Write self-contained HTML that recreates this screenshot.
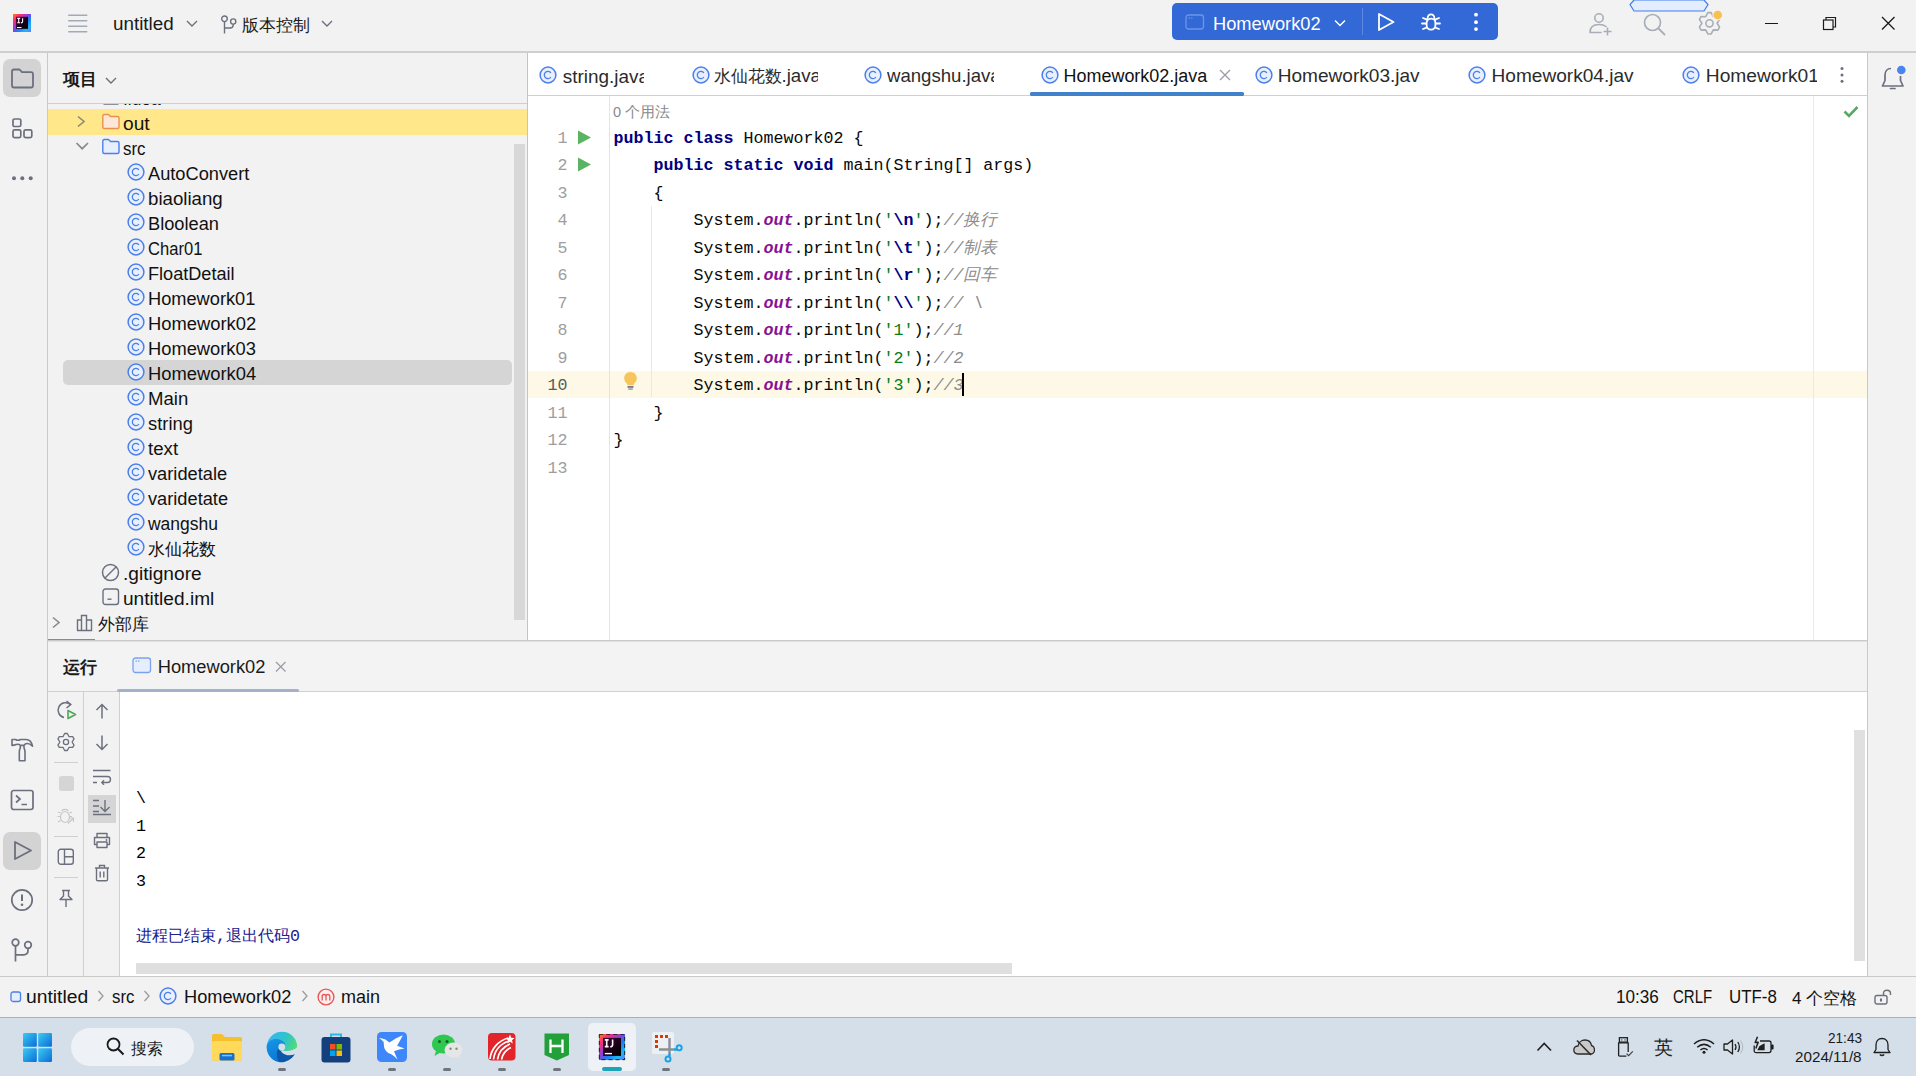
<!DOCTYPE html>
<html><head><meta charset="utf-8"><title>IntelliJ</title>
<style>
html,body{margin:0;padding:0;width:1916px;height:1076px;overflow:hidden;background:#F2F2F2}
body{position:relative;font-family:"Liberation Sans",sans-serif}
div{position:absolute;box-sizing:border-box}
</style></head><body>
<div style="left:0px;top:0px;width:1916px;height:1076px;background:#F2F2F2;"></div>
<div style="left:0px;top:51px;width:1916px;height:2px;background:#CFCFCF;"></div>
<div style="left:47px;top:53px;width:1px;height:923px;background:#C9C9C9;"></div>
<div style="left:1867px;top:53px;width:1px;height:923px;background:#C9C9C9;"></div>
<div style="left:48px;top:53px;width:479px;height:587px;background:#F2F2F2;"></div>
<div style="left:48px;top:103px;width:479px;height:1px;background:#CFCFCF;"></div>
<div style="left:527px;top:53px;width:1px;height:587px;background:#C4C4C4;"></div>
<div style="left:528px;top:53px;width:1339px;height:587px;background:#FFFFFF;"></div>
<div style="left:528px;top:95px;width:1339px;height:1px;background:#D0D0D0;"></div>
<div style="left:609px;top:96px;width:1px;height:544px;background:#E4E4E4;"></div>
<div style="left:1813px;top:96px;width:1px;height:544px;background:#E9E9E9;"></div>
<div style="left:48px;top:640px;width:1819px;height:1px;background:#C9C9C9;"></div>
<div style="left:48px;top:641px;width:1819px;height:1px;background:#E2E2E2;"></div>
<div style="left:48px;top:642px;width:1819px;height:49px;background:#F3F3F3;"></div>
<div style="left:48px;top:691px;width:1819px;height:1px;background:#D0D0D0;"></div>
<div style="left:48px;top:692px;width:35px;height:284px;background:#F2F2F2;"></div>
<div style="left:83px;top:692px;width:1px;height:284px;background:#CFCFCF;"></div>
<div style="left:84px;top:692px;width:35px;height:284px;background:#F2F2F2;"></div>
<div style="left:119px;top:692px;width:1px;height:284px;background:#CFCFCF;"></div>
<div style="left:120px;top:692px;width:1747px;height:284px;background:#FFFFFF;"></div>
<div style="left:0px;top:976px;width:1916px;height:1px;background:#C9C9C9;"></div>
<div style="left:0px;top:977px;width:1916px;height:40px;background:#F2F2F2;"></div>
<div style="left:0px;top:1017px;width:1916px;height:59px;background:#D4DFE9;"></div>
<div style="left:0px;top:1017px;width:1916px;height:1px;background:#A9B0B6;"></div>
<svg style="position:absolute;left:13px;top:14px;" width="18" height="18" viewBox="0 0 18 18"><defs><linearGradient id="ijg" x1="0" y1="0" x2="1" y2="1"><stop offset="0" stop-color="#FF8A00"/><stop offset="0.2" stop-color="#FF2D78"/><stop offset="0.45" stop-color="#8A3FD8"/><stop offset="0.6" stop-color="#1A7CF5"/><stop offset="0.8" stop-color="#20B6F5"/><stop offset="1" stop-color="#6A7BFF"/></linearGradient><linearGradient id="iji" x1="0" y1="0" x2="1" y2="1"><stop offset="0" stop-color="#3D0032"/><stop offset="1" stop-color="#000"/></linearGradient></defs><rect x="0" y="0" width="18" height="18" fill="url(#ijg)"/><rect x="3.1" y="2.8" width="11.9" height="12" fill="url(#iji)"/><path d="M4.2 4.4 H7.2 M5.7 4.4 V8.8 M4.2 8.8 H7.2 M9.6 4.2 V7.6 Q9.6 8.9 8 8.9" fill="none" stroke="#fff" stroke-width="1.1"/><rect x="4" y="13" width="4.5" height="1" fill="#fff"/></svg>
<svg style="position:absolute;left:67px;top:14px;" width="21" height="19" viewBox="0 0 21 19"><rect x="1" y="0.4" width="19.5" height="1.6" rx="0.8" fill="#A4A9B8"/><rect x="1" y="6.0" width="19.5" height="1.6" rx="0.8" fill="#A4A9B8"/><rect x="1" y="11.4" width="19.5" height="1.6" rx="0.8" fill="#A4A9B8"/><rect x="1" y="17.0" width="19.5" height="1.6" rx="0.8" fill="#A4A9B8"/></svg>
<div style="left:113.40px;top:14.14px;font:normal normal 18.300px/20.441px 'Liberation Sans', sans-serif;color:#1A1A1A;white-space:pre;transform:scaleX(1.0303);transform-origin:0 0;">untitled</div>
<svg style="position:absolute;left:186px;top:20px;" width="12" height="7" viewBox="0 0 12 7"><path d="M1 1 L6 6 L11 1" fill="none" stroke="#6C707E" stroke-width="1.4"/></svg>
<svg style="position:absolute;left:219.5px;top:15px;" width="17" height="19" viewBox="0 0 17 19"><circle cx="4.5" cy="3.8" r="2.8" fill="none" stroke="#6C707E" stroke-width="1.4"/><circle cx="13.2" cy="6.5" r="2.6" fill="none" stroke="#6C707E" stroke-width="1.4"/><path d="M4.5 6.6 V18.5 M4.5 13 H10 Q13.2 13 13.2 10 V9.1" fill="none" stroke="#6C707E" stroke-width="1.4"/></svg>
<div style="left:241.50px;top:15.92px;font:normal normal 17.000px/18.989px 'Liberation Sans', sans-serif;color:#1A1A1A;white-space:pre;">版本控制</div>
<svg style="position:absolute;left:321px;top:20px;" width="12" height="7" viewBox="0 0 12 7"><path d="M1 1 L6 6 L11 1" fill="none" stroke="#6C707E" stroke-width="1.4"/></svg>
<div style="left:1172px;top:3px;width:326px;height:37px;background:#3369D6;border-radius:5px"></div>
<svg style="position:absolute;left:1185px;top:14px;" width="20" height="16" viewBox="0 0 20 16"><rect x="1" y="1" width="17.5" height="14" rx="2.5" fill="none" stroke="#6D95E6" stroke-width="1.3"/><rect x="3.5" y="3.5" width="1.5" height="1.2" fill="#6D95E6"/><rect x="6" y="3.5" width="1.5" height="1.2" fill="#6D95E6"/></svg>
<div style="left:1213.00px;top:14.45px;font:normal normal 18.282px/20.421px 'Liberation Sans', sans-serif;color:#FFFFFF;white-space:pre;">Homework02</div>
<svg style="position:absolute;left:1334px;top:19px;" width="12" height="8" viewBox="0 0 12 8"><path d="M1 1.5 L6 6.5 L11 1.5" fill="none" stroke="#fff" stroke-width="1.5"/></svg>
<div style="left:1362px;top:8px;width:1px;height:27px;background:#5F88E0;"></div>
<svg style="position:absolute;left:1377px;top:12px;" width="19" height="20" viewBox="0 0 19 20"><path d="M2 2 L16.5 10 L2 18 Z" fill="none" stroke="#fff" stroke-width="1.8" stroke-linejoin="round"/></svg>
<svg style="position:absolute;left:1419px;top:12px;" width="24" height="20" viewBox="0 0 24 20"><rect x="7.6" y="6.6" width="8.8" height="11" rx="4.3" fill="none" stroke="#fff" stroke-width="1.8"/><path d="M8.6 6.6 C8.4 1 15.6 1 15.4 6.6 M4 6 L7.8 7.6 M3 11.5 H7 M4 17 L7.6 15.6 M20 6 L16.2 7.6 M21 11.5 H17 M20 17 L16.4 15.6" fill="none" stroke="#fff" stroke-width="1.8" stroke-linecap="round"/></svg>
<svg style="position:absolute;left:1472px;top:12px;" width="8" height="20" viewBox="0 0 8 20"><circle cx="4" cy="2.7" r="1.9" fill="#fff"/><circle cx="4" cy="10.2" r="1.9" fill="#fff"/><circle cx="4" cy="17.1" r="1.9" fill="#fff"/></svg>
<svg style="position:absolute;left:1628px;top:-1px;" width="82" height="14" viewBox="0 0 82 14"><path d="M6 1 H76 L80 5.5 L76 12 H6 L2 5.5 Z" fill="#E3EDFD" stroke="#3D7FF0" stroke-width="1.2"/></svg>
<svg style="position:absolute;left:1589px;top:12px;" width="24" height="25" viewBox="0 0 24 25"><circle cx="10" cy="6" r="4.2" fill="none" stroke="#A9ADB8" stroke-width="1.6"/><path d="M1 20.5 C1 14 6 12.5 10 12.5 C13 12.5 15.5 13.3 17 14.5 M1 20.5 H12" fill="none" stroke="#A9ADB8" stroke-width="1.6" stroke-linecap="round"/><path d="M18.5 15.5 V23.5 M14.5 19.5 H22.5" stroke="#A9ADB8" stroke-width="1.6"/></svg>
<svg style="position:absolute;left:1643px;top:13px;" width="24" height="23" viewBox="0 0 24 23"><circle cx="9.5" cy="9.5" r="8" fill="none" stroke="#A9ADB8" stroke-width="1.7"/><path d="M15.5 15.5 L22 22" stroke="#A9ADB8" stroke-width="1.8"/></svg>
<svg style="position:absolute;left:1696px;top:9px;" width="28" height="28" viewBox="0 0 28 28"><path d="M15.19 3.63 L11.81 3.63 L9.70 7.72 L5.11 7.50 L3.42 10.43 L5.90 14.30 L3.42 18.17 L5.11 21.10 L9.70 20.88 L11.81 24.97 L15.19 24.97 L17.30 20.88 L21.89 21.10 L23.58 18.17 L21.10 14.30 L23.58 10.43 L21.89 7.50 L17.30 7.72 Z" fill="none" stroke="#A9ADB8" stroke-width="1.6" stroke-linejoin="round"/><circle cx="13.5" cy="14.3" r="3.6" fill="none" stroke="#A9ADB8" stroke-width="1.6"/><circle cx="21.7" cy="6" r="5.4" fill="#F2F2F2"/><circle cx="21.7" cy="6" r="4.3" fill="#F7C04F"/></svg>
<div style="left:1765px;top:23px;width:12.5px;height:1.3px;background:#1A1A1A;"></div>
<svg style="position:absolute;left:1822px;top:16px;" width="16" height="15" viewBox="0 0 16 15"><rect x="1.5" y="4" width="9.5" height="9.5" fill="none" stroke="#1A1A1A" stroke-width="1.2"/><path d="M4 4 V1.5 H13.5 V11 H11" fill="none" stroke="#1A1A1A" stroke-width="1.2"/></svg>
<svg style="position:absolute;left:1881px;top:16px;" width="15" height="15" viewBox="0 0 15 15"><path d="M1 1 L13.5 13.5 M13.5 1 L1 13.5" stroke="#1A1A1A" stroke-width="1.3"/></svg>
<div style="left:3px;top:59px;width:38px;height:38px;background:#D3D3D3;border-radius:7px"></div>
<svg style="position:absolute;left:10px;top:68px;" width="25" height="21" viewBox="0 0 25 21"><path d="M2 3.5 Q2 1.5 4 1.5 H9.5 L12 4.2 H21 Q23 4.2 23 6.2 V17.5 Q23 19.5 21 19.5 H4 Q2 19.5 2 17.5 Z" fill="none" stroke="#6C707E" stroke-width="1.8" stroke-linejoin="round"/></svg>
<svg style="position:absolute;left:12px;top:118px;" width="22" height="21" viewBox="0 0 22 21"><rect x="1" y="1" width="7.8" height="7.5" rx="1.6" fill="none" stroke="#6C707E" stroke-width="1.7"/><rect x="1" y="11.8" width="7.8" height="7.8" rx="1.6" fill="none" stroke="#6C707E" stroke-width="1.7"/><rect x="12" y="11.8" width="7.8" height="7.8" rx="1.6" fill="none" stroke="#6C707E" stroke-width="1.7"/></svg>
<svg style="position:absolute;left:10px;top:174px;" width="26" height="9" viewBox="0 0 26 9"><circle cx="4" cy="4.3" r="2" fill="#6C707E"/><circle cx="12.3" cy="4.3" r="2" fill="#6C707E"/><circle cx="20.7" cy="4.3" r="2" fill="#6C707E"/></svg>
<svg style="position:absolute;left:10px;top:737px;" width="25" height="26" viewBox="0 0 25 26"><path d="M2 2.5 H5.5 Q7.8 4 10.5 2.5 H16 Q21.2 2.5 22.5 9.2 Q19.5 6.2 16.8 6.5 Q14.8 6.8 14 8.4 H10.3 Q8.8 6.6 6.2 7.6 Q4.2 8.4 2 8.4 Z M10.3 8.4 V10.8 Q9.3 13 9.3 15 V23.8 H15 V15 Q15 13 14 10.8 V8.4" fill="none" stroke="#6C707E" stroke-width="1.6" stroke-linejoin="round"/></svg>
<svg style="position:absolute;left:10px;top:789px;" width="25" height="22" viewBox="0 0 25 22"><rect x="1.5" y="1.5" width="21.5" height="19" rx="2.2" fill="none" stroke="#6C707E" stroke-width="1.7"/><path d="M6 6.5 L10 10 L6 13.5 M11.5 15.5 H17" fill="none" stroke="#6C707E" stroke-width="1.7"/></svg>
<div style="left:3px;top:832px;width:38px;height:38px;background:#D3D3D3;border-radius:7px"></div>
<svg style="position:absolute;left:13px;top:840px;" width="20" height="21" viewBox="0 0 20 21"><path d="M2 2 L18 10.5 L2 19 Z" fill="none" stroke="#6C707E" stroke-width="1.8" stroke-linejoin="round"/></svg>
<svg style="position:absolute;left:10px;top:888px;" width="25" height="24" viewBox="0 0 25 24"><circle cx="12" cy="12" r="10.2" fill="none" stroke="#6C707E" stroke-width="1.7"/><path d="M12 6.5 V13" stroke="#6C707E" stroke-width="2"/><circle cx="12" cy="16.8" r="1.3" fill="#6C707E"/></svg>
<svg style="position:absolute;left:11px;top:938px;" width="24" height="25" viewBox="0 0 24 25"><circle cx="4.5" cy="4.5" r="3.3" fill="none" stroke="#6C707E" stroke-width="1.7"/><circle cx="17" cy="7" r="3.3" fill="none" stroke="#6C707E" stroke-width="1.7"/><path d="M4.5 7.8 V23.5 M4.5 16.8 H12.5 Q17 16.8 17 12.5 V10.3" fill="none" stroke="#6C707E" stroke-width="1.7"/></svg>
<div style="left:63.20px;top:71.10px;font:normal bold 16.800px/18.766px 'Liberation Sans', sans-serif;color:#1A1A1A;white-space:pre;">项目</div>
<svg style="position:absolute;left:105px;top:77px;" width="12" height="7" viewBox="0 0 12 7"><path d="M1 1 L6 6 L11 1" fill="none" stroke="#6C707E" stroke-width="1.4"/></svg>
<div style="left:48px;top:104px;width:479px;height:536px;overflow:hidden">
<svg style="position:absolute;left:54px;top:-6px;" width="18" height="10" viewBox="0 0 18 10"><rect x="1" y="0" width="16" height="6" rx="1.5" fill="#E8E8E8" stroke="#6C707E" stroke-width="1.3"/></svg>
<div style="left:75.30px;top:-15.16px;font:normal normal 18.300px/20.441px 'Liberation Sans', sans-serif;color:#111;white-space:pre;transform:scaleX(0.9500);transform-origin:0 0;">.idea</div>
<div style="left:0px;top:5px;width:479px;height:25.5px;background:#FFE78A;"></div>
<svg style="position:absolute;left:28px;top:11px;" width="10" height="13" viewBox="0 0 10 13"><path d="M2 1.5 L8 6.5 L2 11.5" fill="none" stroke="#8E8A6A" stroke-width="1.6"/></svg>
<svg style="position:absolute;left:53px;top:9px;" width="20" height="17" viewBox="0 0 20 17"><path d="M1.8 3 Q1.8 1.5 3.3 1.5 H7.5 L9.5 3.5 H16.5 Q18 3.5 18 5 V14 Q18 15.5 16.5 15.5 H3.3 Q1.8 15.5 1.8 14 Z" fill="#FDE8D8" stroke="#E8914E" stroke-width="1.4" stroke-linejoin="round"/></svg>
<div style="left:75.30px;top:9.84px;font:normal normal 18.300px/20.441px 'Liberation Sans', sans-serif;color:#111;white-space:pre;transform:scaleX(1.0456);transform-origin:0 0;">out</div>
<svg style="position:absolute;left:27px;top:37px;" width="15" height="10" viewBox="0 0 15 10"><path d="M1.5 2 L7.2 7.7 L13 2" fill="none" stroke="#8A8A8A" stroke-width="1.7"/></svg>
<svg style="position:absolute;left:53px;top:34px;" width="20" height="17" viewBox="0 0 20 17"><path d="M1.8 3 Q1.8 1.5 3.3 1.5 H7.5 L9.5 3.5 H16.5 Q18 3.5 18 5 V14 Q18 15.5 16.5 15.5 H3.3 Q1.8 15.5 1.8 14 Z" fill="#E7EEFD" stroke="#4A80EE" stroke-width="1.4" stroke-linejoin="round"/></svg>
<div style="left:75.30px;top:34.94px;font:normal normal 18.300px/20.441px 'Liberation Sans', sans-serif;color:#111;white-space:pre;transform:scaleX(0.9224);transform-origin:0 0;">src</div>
<div style="left:15px;top:256px;width:449px;height:24.5px;background:#D5D5D5;border-radius:5px"></div>
<svg style="position:absolute;left:79px;top:59.30000000000001px" width="18" height="18" viewBox="0 0 18 18"><circle cx="9" cy="9" r="7.9" fill="#E8EFFD" stroke="#4B7FEA" stroke-width="1.5"/><path d="M11.9 7.0 A3.6 3.6 0 1 0 11.9 11.0" fill="none" stroke="#4B7FEA" stroke-width="1.3"/></svg>
<div style="left:100.40px;top:60.44px;font:normal normal 18.300px/20.441px 'Liberation Sans', sans-serif;color:#111;white-space:pre;transform:scaleX(0.9968);transform-origin:0 0;">AutoConvert</div>
<svg style="position:absolute;left:79px;top:84.30000000000001px" width="18" height="18" viewBox="0 0 18 18"><circle cx="9" cy="9" r="7.9" fill="#E8EFFD" stroke="#4B7FEA" stroke-width="1.5"/><path d="M11.9 7.0 A3.6 3.6 0 1 0 11.9 11.0" fill="none" stroke="#4B7FEA" stroke-width="1.3"/></svg>
<div style="left:100.40px;top:85.44px;font:normal normal 18.300px/20.441px 'Liberation Sans', sans-serif;color:#111;white-space:pre;transform:scaleX(1.0210);transform-origin:0 0;">biaoliang</div>
<svg style="position:absolute;left:79px;top:109.30000000000001px" width="18" height="18" viewBox="0 0 18 18"><circle cx="9" cy="9" r="7.9" fill="#E8EFFD" stroke="#4B7FEA" stroke-width="1.5"/><path d="M11.9 7.0 A3.6 3.6 0 1 0 11.9 11.0" fill="none" stroke="#4B7FEA" stroke-width="1.3"/></svg>
<div style="left:100.40px;top:110.44px;font:normal normal 18.300px/20.441px 'Liberation Sans', sans-serif;color:#111;white-space:pre;transform:scaleX(0.9968);transform-origin:0 0;">Bloolean</div>
<svg style="position:absolute;left:79px;top:134.3px" width="18" height="18" viewBox="0 0 18 18"><circle cx="9" cy="9" r="7.9" fill="#E8EFFD" stroke="#4B7FEA" stroke-width="1.5"/><path d="M11.9 7.0 A3.6 3.6 0 1 0 11.9 11.0" fill="none" stroke="#4B7FEA" stroke-width="1.3"/></svg>
<div style="left:100.40px;top:135.44px;font:normal normal 18.300px/20.441px 'Liberation Sans', sans-serif;color:#111;white-space:pre;transform:scaleX(0.9064);transform-origin:0 0;">Char01</div>
<svg style="position:absolute;left:79px;top:159.3px" width="18" height="18" viewBox="0 0 18 18"><circle cx="9" cy="9" r="7.9" fill="#E8EFFD" stroke="#4B7FEA" stroke-width="1.5"/><path d="M11.9 7.0 A3.6 3.6 0 1 0 11.9 11.0" fill="none" stroke="#4B7FEA" stroke-width="1.3"/></svg>
<div style="left:100.40px;top:160.44px;font:normal normal 18.300px/20.441px 'Liberation Sans', sans-serif;color:#111;white-space:pre;transform:scaleX(0.9912);transform-origin:0 0;">FloatDetail</div>
<svg style="position:absolute;left:79px;top:184.3px" width="18" height="18" viewBox="0 0 18 18"><circle cx="9" cy="9" r="7.9" fill="#E8EFFD" stroke="#4B7FEA" stroke-width="1.5"/><path d="M11.9 7.0 A3.6 3.6 0 1 0 11.9 11.0" fill="none" stroke="#4B7FEA" stroke-width="1.3"/></svg>
<div style="left:100.40px;top:185.44px;font:normal normal 18.300px/20.441px 'Liberation Sans', sans-serif;color:#111;white-space:pre;transform:scaleX(0.9971);transform-origin:0 0;">Homework01</div>
<svg style="position:absolute;left:79px;top:209.3px" width="18" height="18" viewBox="0 0 18 18"><circle cx="9" cy="9" r="7.9" fill="#E8EFFD" stroke="#4B7FEA" stroke-width="1.5"/><path d="M11.9 7.0 A3.6 3.6 0 1 0 11.9 11.0" fill="none" stroke="#4B7FEA" stroke-width="1.3"/></svg>
<div style="left:100.40px;top:210.44px;font:normal normal 18.300px/20.441px 'Liberation Sans', sans-serif;color:#111;white-space:pre;transform:scaleX(1.0046);transform-origin:0 0;">Homework02</div>
<svg style="position:absolute;left:79px;top:234.3px" width="18" height="18" viewBox="0 0 18 18"><circle cx="9" cy="9" r="7.9" fill="#E8EFFD" stroke="#4B7FEA" stroke-width="1.5"/><path d="M11.9 7.0 A3.6 3.6 0 1 0 11.9 11.0" fill="none" stroke="#4B7FEA" stroke-width="1.3"/></svg>
<div style="left:100.40px;top:235.44px;font:normal normal 18.300px/20.441px 'Liberation Sans', sans-serif;color:#111;white-space:pre;transform:scaleX(1.0018);transform-origin:0 0;">Homework03</div>
<svg style="position:absolute;left:79px;top:259.3px" width="18" height="18" viewBox="0 0 18 18"><circle cx="9" cy="9" r="7.9" fill="#E8EFFD" stroke="#4B7FEA" stroke-width="1.5"/><path d="M11.9 7.0 A3.6 3.6 0 1 0 11.9 11.0" fill="none" stroke="#4B7FEA" stroke-width="1.3"/></svg>
<div style="left:100.40px;top:260.44px;font:normal normal 18.300px/20.441px 'Liberation Sans', sans-serif;color:#111;white-space:pre;transform:scaleX(1.0046);transform-origin:0 0;">Homework04</div>
<svg style="position:absolute;left:79px;top:284.3px" width="18" height="18" viewBox="0 0 18 18"><circle cx="9" cy="9" r="7.9" fill="#E8EFFD" stroke="#4B7FEA" stroke-width="1.5"/><path d="M11.9 7.0 A3.6 3.6 0 1 0 11.9 11.0" fill="none" stroke="#4B7FEA" stroke-width="1.3"/></svg>
<div style="left:100.40px;top:285.44px;font:normal normal 18.300px/20.441px 'Liberation Sans', sans-serif;color:#111;white-space:pre;transform:scaleX(1.0160);transform-origin:0 0;">Main</div>
<svg style="position:absolute;left:79px;top:309.3px" width="18" height="18" viewBox="0 0 18 18"><circle cx="9" cy="9" r="7.9" fill="#E8EFFD" stroke="#4B7FEA" stroke-width="1.5"/><path d="M11.9 7.0 A3.6 3.6 0 1 0 11.9 11.0" fill="none" stroke="#4B7FEA" stroke-width="1.3"/></svg>
<div style="left:100.40px;top:310.44px;font:normal normal 18.300px/20.441px 'Liberation Sans', sans-serif;color:#111;white-space:pre;transform:scaleX(1.0034);transform-origin:0 0;">string</div>
<svg style="position:absolute;left:79px;top:334.3px" width="18" height="18" viewBox="0 0 18 18"><circle cx="9" cy="9" r="7.9" fill="#E8EFFD" stroke="#4B7FEA" stroke-width="1.5"/><path d="M11.9 7.0 A3.6 3.6 0 1 0 11.9 11.0" fill="none" stroke="#4B7FEA" stroke-width="1.3"/></svg>
<div style="left:100.40px;top:335.44px;font:normal normal 18.300px/20.441px 'Liberation Sans', sans-serif;color:#111;white-space:pre;transform:scaleX(1.0205);transform-origin:0 0;">text</div>
<svg style="position:absolute;left:79px;top:359.3px" width="18" height="18" viewBox="0 0 18 18"><circle cx="9" cy="9" r="7.9" fill="#E8EFFD" stroke="#4B7FEA" stroke-width="1.5"/><path d="M11.9 7.0 A3.6 3.6 0 1 0 11.9 11.0" fill="none" stroke="#4B7FEA" stroke-width="1.3"/></svg>
<div style="left:100.40px;top:360.44px;font:normal normal 18.300px/20.441px 'Liberation Sans', sans-serif;color:#111;white-space:pre;transform:scaleX(0.9981);transform-origin:0 0;">varidetale</div>
<svg style="position:absolute;left:79px;top:384.3px" width="18" height="18" viewBox="0 0 18 18"><circle cx="9" cy="9" r="7.9" fill="#E8EFFD" stroke="#4B7FEA" stroke-width="1.5"/><path d="M11.9 7.0 A3.6 3.6 0 1 0 11.9 11.0" fill="none" stroke="#4B7FEA" stroke-width="1.3"/></svg>
<div style="left:100.40px;top:385.44px;font:normal normal 18.300px/20.441px 'Liberation Sans', sans-serif;color:#111;white-space:pre;transform:scaleX(0.9967);transform-origin:0 0;">varidetate</div>
<svg style="position:absolute;left:79px;top:409.29999999999995px" width="18" height="18" viewBox="0 0 18 18"><circle cx="9" cy="9" r="7.9" fill="#E8EFFD" stroke="#4B7FEA" stroke-width="1.5"/><path d="M11.9 7.0 A3.6 3.6 0 1 0 11.9 11.0" fill="none" stroke="#4B7FEA" stroke-width="1.3"/></svg>
<div style="left:100.40px;top:410.44px;font:normal normal 18.300px/20.441px 'Liberation Sans', sans-serif;color:#111;white-space:pre;transform:scaleX(0.9556);transform-origin:0 0;">wangshu</div>
<svg style="position:absolute;left:79px;top:434.29999999999995px" width="18" height="18" viewBox="0 0 18 18"><circle cx="9" cy="9" r="7.9" fill="#E8EFFD" stroke="#4B7FEA" stroke-width="1.5"/><path d="M11.9 7.0 A3.6 3.6 0 1 0 11.9 11.0" fill="none" stroke="#4B7FEA" stroke-width="1.3"/></svg>
<div style="left:100.40px;top:435.62px;font:normal normal 17.000px/18.989px 'Liberation Sans', sans-serif;color:#111;white-space:pre;">水仙花数</div>
<svg style="position:absolute;left:53px;top:459px;" width="20" height="20" viewBox="0 0 20 20"><circle cx="9.5" cy="9.5" r="8" fill="none" stroke="#6C707E" stroke-width="1.5"/><path d="M4 15 L15 4" stroke="#6C707E" stroke-width="1.5"/></svg>
<div style="left:75.30px;top:460.44px;font:normal normal 18.300px/20.441px 'Liberation Sans', sans-serif;color:#111;white-space:pre;transform:scaleX(1.0454);transform-origin:0 0;">.gitignore</div>
<svg style="position:absolute;left:54px;top:484px;" width="18" height="18" viewBox="0 0 18 18"><rect x="1" y="1" width="15.5" height="15.5" rx="2.5" fill="none" stroke="#6C707E" stroke-width="1.4"/><rect x="5.5" y="10.5" width="4" height="1.4" fill="#6C707E"/></svg>
<div style="left:75.30px;top:485.44px;font:normal normal 18.300px/20.441px 'Liberation Sans', sans-serif;color:#111;white-space:pre;transform:scaleX(1.0449);transform-origin:0 0;">untitled.iml</div>
<svg style="position:absolute;left:3px;top:512px;" width="10" height="13" viewBox="0 0 10 13"><path d="M2 1.5 L8 6.5 L2 11.5" fill="none" stroke="#8A8A8A" stroke-width="1.6"/></svg>
<svg style="position:absolute;left:28px;top:510px;" width="19" height="18" viewBox="0 0 19 18"><path d="M1.5 16.5 V6 H5.5 V16.5 M5.5 16.5 V1.5 H10.5 V16.5 M10.5 16.5 V6 H15.5 V16.5 H1 " fill="none" stroke="#6C707E" stroke-width="1.4"/></svg>
<div style="left:49.50px;top:510.62px;font:normal normal 17.000px/18.989px 'Liberation Sans', sans-serif;color:#111;white-space:pre;">外部库</div>
<div style="left:466px;top:40px;width:11px;height:476px;background:#D8D8D8;"></div>
<div style="left:0px;top:535px;width:47px;height:1px;background:#5A8DEE;"></div>
</div>
<svg style="position:absolute;left:539px;top:66px" width="18" height="18" viewBox="0 0 18 18"><circle cx="9" cy="9" r="7.9" fill="#E8EFFD" stroke="#4B7FEA" stroke-width="1.5"/><path d="M11.9 7.0 A3.6 3.6 0 1 0 11.9 11.0" fill="none" stroke="#4B7FEA" stroke-width="1.3"/></svg>
<div style="left:562.8px;top:60px;width:81.5px;height:30px;overflow:hidden">
<div style="left:0.00px;top:5.57px;font:normal normal 18.930px/21.145px 'Liberation Sans', sans-serif;color:#2B2B2B;white-space:pre;">string.java</div>
</div>
<svg style="position:absolute;left:691.5px;top:66px" width="18" height="18" viewBox="0 0 18 18"><circle cx="9" cy="9" r="7.9" fill="#E8EFFD" stroke="#4B7FEA" stroke-width="1.5"/><path d="M11.9 7.0 A3.6 3.6 0 1 0 11.9 11.0" fill="none" stroke="#4B7FEA" stroke-width="1.3"/></svg>
<div style="left:713.5px;top:60px;width:104.5px;height:30px;overflow:hidden">
<div style="left:0px;top:5.78px;font:normal normal 18.7px/20.89px 'Liberation Sans', sans-serif;color:#2B2B2B;white-space:pre"><span style="font-size:17.2px">水仙花数</span>.java</div>
</div>
<svg style="position:absolute;left:864px;top:66px" width="18" height="18" viewBox="0 0 18 18"><circle cx="9" cy="9" r="7.9" fill="#E8EFFD" stroke="#4B7FEA" stroke-width="1.5"/><path d="M11.9 7.0 A3.6 3.6 0 1 0 11.9 11.0" fill="none" stroke="#4B7FEA" stroke-width="1.3"/></svg>
<div style="left:887px;top:60px;width:106.8px;height:30px;overflow:hidden">
<div style="left:0.00px;top:5.87px;font:normal normal 18.600px/20.776px 'Liberation Sans', sans-serif;color:#2B2B2B;white-space:pre;">wangshu.java</div>
</div>
<svg style="position:absolute;left:1041px;top:66px" width="18" height="18" viewBox="0 0 18 18"><circle cx="9" cy="9" r="7.9" fill="#E8EFFD" stroke="#4B7FEA" stroke-width="1.5"/><path d="M11.9 7.0 A3.6 3.6 0 1 0 11.9 11.0" fill="none" stroke="#4B7FEA" stroke-width="1.3"/></svg>
<div style="left:1063.60px;top:66.46px;font:normal normal 17.942px/20.042px 'Liberation Sans', sans-serif;color:#111;white-space:pre;">Homework02.java</div>
<svg style="position:absolute;left:1219px;top:69px;" width="12" height="12" viewBox="0 0 12 12"><path d="M1 1 L11 11 M11 1 L1 11" stroke="#9A9DA5" stroke-width="1.3"/></svg>
<div style="left:1030px;top:92px;width:214px;height:3.5px;background:#4181C9;border-radius:1.5px"></div>
<svg style="position:absolute;left:1254.6px;top:66px" width="18" height="18" viewBox="0 0 18 18"><circle cx="9" cy="9" r="7.9" fill="#E8EFFD" stroke="#4B7FEA" stroke-width="1.5"/><path d="M11.9 7.0 A3.6 3.6 0 1 0 11.9 11.0" fill="none" stroke="#4B7FEA" stroke-width="1.3"/></svg>
<div style="left:1277.7px;top:60px;width:142.8px;height:30px;overflow:hidden">
<div style="left:0.00px;top:5.44px;font:normal normal 19.070px/21.301px 'Liberation Sans', sans-serif;color:#2B2B2B;white-space:pre;">Homework03.java</div>
</div>
<svg style="position:absolute;left:1468px;top:66px" width="18" height="18" viewBox="0 0 18 18"><circle cx="9" cy="9" r="7.9" fill="#E8EFFD" stroke="#4B7FEA" stroke-width="1.5"/><path d="M11.9 7.0 A3.6 3.6 0 1 0 11.9 11.0" fill="none" stroke="#4B7FEA" stroke-width="1.3"/></svg>
<div style="left:1491.6px;top:60px;width:142.8px;height:30px;overflow:hidden">
<div style="left:0.00px;top:5.44px;font:normal normal 19.070px/21.301px 'Liberation Sans', sans-serif;color:#2B2B2B;white-space:pre;">Homework04.java</div>
</div>
<svg style="position:absolute;left:1682px;top:66px" width="18" height="18" viewBox="0 0 18 18"><circle cx="9" cy="9" r="7.9" fill="#E8EFFD" stroke="#4B7FEA" stroke-width="1.5"/><path d="M11.9 7.0 A3.6 3.6 0 1 0 11.9 11.0" fill="none" stroke="#4B7FEA" stroke-width="1.3"/></svg>
<div style="left:1705.8px;top:60px;width:110.8px;height:30px;overflow:hidden">
<div style="left:0.00px;top:5.32px;font:normal normal 19.200px/21.446px 'Liberation Sans', sans-serif;color:#2B2B2B;white-space:pre;">Homework01.java</div>
</div>
<svg style="position:absolute;left:1838px;top:66px;" width="8" height="18" viewBox="0 0 8 18"><circle cx="4" cy="2.6" r="1.5" fill="#6C707E"/><circle cx="4" cy="9" r="1.5" fill="#6C707E"/><circle cx="4" cy="15.2" r="1.5" fill="#6C707E"/></svg>
<svg style="position:absolute;left:1881px;top:65px;" width="26" height="27" viewBox="0 0 26 27"><path d="M10 3.5 C6 3.5 4 6.5 4 10 V15.5 L1.5 21 H22 L19.5 15.5 V11" fill="none" stroke="#6C707E" stroke-width="1.7" stroke-linejoin="round"/><path d="M9.5 23.5 H14" stroke="#6C707E" stroke-width="1.7" stroke-linecap="round"/><circle cx="20.3" cy="5" r="4.3" fill="#4A84F0"/></svg>
<div style="left:528px;top:371px;width:1339px;height:27px;background:#FDF9E6;"></div>
<div style="left:609px;top:96px;width:1px;height:544px;background:#E4E4E4;"></div>
<div style="left:1813px;top:96px;width:1px;height:544px;background:#E9E9E9;"></div>
<div style="left:651px;top:206px;width:1px;height:191px;background:#E8E8E8;"></div>
<div style="left:613.10px;top:103.59px;font:normal normal 14.600px/16.308px 'Liberation Sans', sans-serif;color:#8A8A8A;white-space:pre;">0 个用法</div>
<div style="left:613.5px;top:129.72px;font:16.667px/18.880px 'Liberation Mono', monospace;color:#080808;white-space:pre"><span style="color:#000080;font-weight:bold">public</span><span style=""> </span><span style="color:#000080;font-weight:bold">class</span><span style=""> Homework02 {</span></div>
<div style="left:613.5px;top:157.22px;font:16.667px/18.880px 'Liberation Mono', monospace;color:#080808;white-space:pre"><span style="">    </span><span style="color:#000080;font-weight:bold">public</span><span style=""> </span><span style="color:#000080;font-weight:bold">static</span><span style=""> </span><span style="color:#000080;font-weight:bold">void</span><span style=""> main(String[] args)</span></div>
<div style="left:613.5px;top:184.72px;font:16.667px/18.880px 'Liberation Mono', monospace;color:#080808;white-space:pre"><span style="">    {</span></div>
<div style="left:613.5px;top:212.22px;font:16.667px/18.880px 'Liberation Mono', monospace;color:#080808;white-space:pre"><span style="">        System.</span><span style="color:#871094;font-style:italic;font-weight:bold">out</span><span style="">.println(</span><span style="color:#067D17">&#x27;</span><span style="color:#000080;font-weight:bold">\n</span><span style="color:#067D17">&#x27;</span><span style="">);</span><span style="color:#8C8C8C;font-style:italic">//换行</span></div>
<div style="left:613.5px;top:239.72px;font:16.667px/18.880px 'Liberation Mono', monospace;color:#080808;white-space:pre"><span style="">        System.</span><span style="color:#871094;font-style:italic;font-weight:bold">out</span><span style="">.println(</span><span style="color:#067D17">&#x27;</span><span style="color:#000080;font-weight:bold">\t</span><span style="color:#067D17">&#x27;</span><span style="">);</span><span style="color:#8C8C8C;font-style:italic">//制表</span></div>
<div style="left:613.5px;top:267.22px;font:16.667px/18.880px 'Liberation Mono', monospace;color:#080808;white-space:pre"><span style="">        System.</span><span style="color:#871094;font-style:italic;font-weight:bold">out</span><span style="">.println(</span><span style="color:#067D17">&#x27;</span><span style="color:#000080;font-weight:bold">\r</span><span style="color:#067D17">&#x27;</span><span style="">);</span><span style="color:#8C8C8C;font-style:italic">//回车</span></div>
<div style="left:613.5px;top:294.72px;font:16.667px/18.880px 'Liberation Mono', monospace;color:#080808;white-space:pre"><span style="">        System.</span><span style="color:#871094;font-style:italic;font-weight:bold">out</span><span style="">.println(</span><span style="color:#067D17">&#x27;</span><span style="color:#000080;font-weight:bold">\\</span><span style="color:#067D17">&#x27;</span><span style="">);</span><span style="color:#8C8C8C;font-style:italic">// \</span></div>
<div style="left:613.5px;top:322.22px;font:16.667px/18.880px 'Liberation Mono', monospace;color:#080808;white-space:pre"><span style="">        System.</span><span style="color:#871094;font-style:italic;font-weight:bold">out</span><span style="">.println(</span><span style="color:#067D17">&#x27;1&#x27;</span><span style="">);</span><span style="color:#8C8C8C;font-style:italic">//1</span></div>
<div style="left:613.5px;top:349.72px;font:16.667px/18.880px 'Liberation Mono', monospace;color:#080808;white-space:pre"><span style="">        System.</span><span style="color:#871094;font-style:italic;font-weight:bold">out</span><span style="">.println(</span><span style="color:#067D17">&#x27;2&#x27;</span><span style="">);</span><span style="color:#8C8C8C;font-style:italic">//2</span></div>
<div style="left:613.5px;top:377.22px;font:16.667px/18.880px 'Liberation Mono', monospace;color:#080808;white-space:pre"><span style="">        System.</span><span style="color:#871094;font-style:italic;font-weight:bold">out</span><span style="">.println(</span><span style="color:#067D17">&#x27;3&#x27;</span><span style="">);</span><span style="color:#8C8C8C;font-style:italic">//3</span></div>
<div style="left:613.5px;top:404.72px;font:16.667px/18.880px 'Liberation Mono', monospace;color:#080808;white-space:pre"><span style="">    }</span></div>
<div style="left:613.5px;top:432.22px;font:16.667px/18.880px 'Liberation Mono', monospace;color:#080808;white-space:pre"><span style="">}</span></div>
<div style="left:557.50px;top:129.72px;font:normal normal 16.667px/18.880px 'Liberation Mono', monospace;color:#9E9E9E;white-space:pre;">1</div>
<div style="left:557.50px;top:157.22px;font:normal normal 16.667px/18.880px 'Liberation Mono', monospace;color:#9E9E9E;white-space:pre;">2</div>
<div style="left:557.50px;top:184.72px;font:normal normal 16.667px/18.880px 'Liberation Mono', monospace;color:#9E9E9E;white-space:pre;">3</div>
<div style="left:557.50px;top:212.22px;font:normal normal 16.667px/18.880px 'Liberation Mono', monospace;color:#9E9E9E;white-space:pre;">4</div>
<div style="left:557.50px;top:239.72px;font:normal normal 16.667px/18.880px 'Liberation Mono', monospace;color:#9E9E9E;white-space:pre;">5</div>
<div style="left:557.50px;top:267.22px;font:normal normal 16.667px/18.880px 'Liberation Mono', monospace;color:#9E9E9E;white-space:pre;">6</div>
<div style="left:557.50px;top:294.72px;font:normal normal 16.667px/18.880px 'Liberation Mono', monospace;color:#9E9E9E;white-space:pre;">7</div>
<div style="left:557.50px;top:322.22px;font:normal normal 16.667px/18.880px 'Liberation Mono', monospace;color:#9E9E9E;white-space:pre;">8</div>
<div style="left:557.50px;top:349.72px;font:normal normal 16.667px/18.880px 'Liberation Mono', monospace;color:#9E9E9E;white-space:pre;">9</div>
<div style="left:547.50px;top:377.22px;font:normal normal 16.667px/18.880px 'Liberation Mono', monospace;color:#5A5A5A;white-space:pre;">10</div>
<div style="left:547.50px;top:404.72px;font:normal normal 16.667px/18.880px 'Liberation Mono', monospace;color:#9E9E9E;white-space:pre;">11</div>
<div style="left:547.50px;top:432.22px;font:normal normal 16.667px/18.880px 'Liberation Mono', monospace;color:#9E9E9E;white-space:pre;">12</div>
<div style="left:547.50px;top:459.72px;font:normal normal 16.667px/18.880px 'Liberation Mono', monospace;color:#9E9E9E;white-space:pre;">13</div>
<div style="left:962px;top:373px;width:2px;height:23px;background:#000;"></div>
<svg style="position:absolute;left:577px;top:129.5px;" width="15" height="15" viewBox="0 0 15 15"><path d="M1 0.5 L14 7.5 L1 14.5 Z" fill="#5BB461"/></svg>
<svg style="position:absolute;left:577px;top:157px;" width="15" height="15" viewBox="0 0 15 15"><path d="M1 0.5 L14 7.5 L1 14.5 Z" fill="#5BB461"/></svg>
<svg style="position:absolute;left:623px;top:371px;" width="16" height="21" viewBox="0 0 16 21"><path d="M7.5 1 C3.5 1 1.2 4 1.2 7.2 C1.2 10 3 11.5 4.2 13 V14.2 H10.8 V13 C12 11.5 13.8 10 13.8 7.2 C13.8 4 11.5 1 7.5 1 Z" fill="#F8C55C"/><rect x="4.5" y="15.2" width="6" height="1.5" fill="#5E6270"/><rect x="5.2" y="17.3" width="4.6" height="1.6" fill="#A0A3AA"/></svg>
<svg style="position:absolute;left:1843px;top:105px;" width="16" height="13" viewBox="0 0 16 13"><path d="M1.5 6.5 L6 11 L14.5 2" fill="none" stroke="#59A869" stroke-width="2.6"/></svg>
<div style="left:63.20px;top:657.93px;font:normal bold 17.200px/19.212px 'Liberation Sans', sans-serif;color:#1A1A1A;white-space:pre;">运行</div>
<svg style="position:absolute;left:132px;top:657px;" width="20" height="17" viewBox="0 0 20 17"><rect x="1" y="1" width="17.5" height="14.5" rx="2.5" fill="#E6EEFD" stroke="#7BA2EE" stroke-width="1.3"/><rect x="3.5" y="3.5" width="1.5" height="1.2" fill="#7BA2EE"/><rect x="6" y="3.5" width="1.5" height="1.2" fill="#7BA2EE"/></svg>
<div style="left:157.70px;top:657.44px;font:normal normal 18.299px/20.440px 'Liberation Sans', sans-serif;color:#1A1A1A;white-space:pre;">Homework02</div>
<svg style="position:absolute;left:275px;top:661px;" width="12" height="12" viewBox="0 0 12 12"><path d="M1 1 L10.5 10.5 M10.5 1 L1 10.5" stroke="#9A9DA5" stroke-width="1.3"/></svg>
<div style="left:117px;top:688.5px;width:182px;height:3px;background:#A3B1CB;border-radius:1.5px"></div>
<svg style="position:absolute;left:55px;top:700px;" width="22" height="21" viewBox="0 0 22 21"><path d="M15.5 4.5 A7.5 7.5 0 1 0 9 17.5" fill="none" stroke="#6C707E" stroke-width="1.5"/><path d="M11.5 1 L15.8 4.5 L11.5 8" fill="none" stroke="#6C707E" stroke-width="1.5"/><path d="M13 10.5 L20.5 14.5 L13 18.5 Z" fill="none" stroke="#4DA659" stroke-width="1.6" stroke-linejoin="round"/></svg>
<svg style="position:absolute;left:55px;top:731px;" width="22" height="22" viewBox="0 0 22 22"><path d="M12.35 2.51 L9.65 2.51 L7.95 5.72 L4.32 5.59 L2.97 7.92 L4.90 11.00 L2.97 14.08 L4.32 16.41 L7.95 16.28 L9.65 19.49 L12.35 19.49 L14.05 16.28 L17.68 16.41 L19.03 14.08 L17.10 11.00 L19.03 7.92 L17.68 5.59 L14.05 5.72 Z" fill="none" stroke="#6C707E" stroke-width="1.3" stroke-linejoin="round"/><circle cx="11" cy="11" r="2.6" fill="none" stroke="#6C707E" stroke-width="1.3"/></svg>
<div style="left:54px;top:762px;width:24px;height:1px;background:#D0D0D0;"></div>
<div style="left:58.5px;top:775.5px;width:15px;height:15px;background:#D5D5D5;border-radius:2.5px"></div>
<svg style="position:absolute;left:57px;top:807px;" width="18" height="17" viewBox="0 0 18 17"><ellipse cx="8" cy="10" rx="4.5" ry="5.5" fill="none" stroke="#C8C8C8" stroke-width="1.2"/><path d="M5 4 C5 1.8 11 1.8 11 4 M3.5 9.5 H0.5 M3.5 6 L1 5 M3.5 13.5 L1 15 M12.5 9.5 H15 M12.5 6 L15 5 M11 16.5 L16.5 11 M12.5 11 H16.5 V15" fill="none" stroke="#C8C8C8" stroke-width="1.2"/></svg>
<div style="left:54px;top:836px;width:24px;height:1px;background:#D0D0D0;"></div>
<svg style="position:absolute;left:57px;top:848px;" width="18" height="18" viewBox="0 0 18 18"><rect x="1.3" y="1.3" width="15" height="15" rx="2.5" fill="none" stroke="#6C707E" stroke-width="1.4"/><path d="M7.5 1.3 V16.3 M7.5 8.8 H16.3" stroke="#6C707E" stroke-width="1.4"/></svg>
<div style="left:54px;top:877px;width:24px;height:1px;background:#D0D0D0;"></div>
<svg style="position:absolute;left:58px;top:889px;" width="16" height="19" viewBox="0 0 16 19"><path d="M4 1.5 H12 M5.5 1.5 V7 L2 10.5 H14 L10.5 7 V1.5 M8 10.5 V18" fill="none" stroke="#6C707E" stroke-width="1.4" stroke-linejoin="round"/></svg>
<svg style="position:absolute;left:95px;top:703px;" width="14" height="16" viewBox="0 0 14 16"><path d="M7 1.5 V15.5 M1.5 7 L7 1.5 L12.5 7" fill="none" stroke="#6C707E" stroke-width="1.5"/></svg>
<svg style="position:absolute;left:95px;top:735px;" width="14" height="16" viewBox="0 0 14 16"><path d="M7 0.5 V14.5 M1.5 9 L7 14.5 L12.5 9" fill="none" stroke="#6C707E" stroke-width="1.5"/></svg>
<svg style="position:absolute;left:92px;top:769px;" width="20" height="16" viewBox="0 0 20 16"><path d="M1 1.5 H18.5 M1 7.5 H15.5 Q18.5 7.5 18.5 10.5 Q18.5 13.5 15.5 13.5 H10 M1 13.5 H5" fill="none" stroke="#6C707E" stroke-width="1.4"/><path d="M12 11.2 L9.8 13.5 L12 15.8" fill="none" stroke="#6C707E" stroke-width="1.4"/></svg>
<div style="left:88px;top:794.5px;width:28px;height:28px;background:#D5D5D5;"></div>
<svg style="position:absolute;left:92px;top:799px;" width="20" height="17" viewBox="0 0 20 17"><path d="M1 1.5 H7 M1 7 H7 M1 12.5 H7 M1 15.5 H19 M13 1 V12 M8.5 8 L13 12.5 L17.5 8" fill="none" stroke="#6C707E" stroke-width="1.4"/></svg>
<svg style="position:absolute;left:93px;top:832px;" width="18" height="17" viewBox="0 0 18 17"><path d="M4 5.5 V1.5 H14 V5.5 M4 12.5 H1.5 V5.5 H16.5 V12.5 H14 M4 10 H14 V15.5 H4 Z" fill="none" stroke="#6C707E" stroke-width="1.4" stroke-linejoin="round"/><circle cx="13.5" cy="8" r="0.9" fill="#6C707E"/></svg>
<svg style="position:absolute;left:94px;top:864px;" width="16" height="18" viewBox="0 0 16 18"><path d="M1 4 H15 M5.5 4 V1.5 H10.5 V4 M2.5 4 V15.5 Q2.5 16.8 3.8 16.8 H12.2 Q13.5 16.8 13.5 15.5 V4 M6.2 7.5 V13.5 M9.8 7.5 V13.5" fill="none" stroke="#6C707E" stroke-width="1.4"/></svg>
<div style="left:136px;top:790.12px;font:16.667px/18.880px 'Liberation Mono', monospace;color:#000;white-space:pre">\</div>
<div style="left:136px;top:817.62px;font:16.667px/18.880px 'Liberation Mono', monospace;color:#000;white-space:pre">1</div>
<div style="left:136px;top:845.12px;font:16.667px/18.880px 'Liberation Mono', monospace;color:#000;white-space:pre">2</div>
<div style="left:136px;top:872.62px;font:16.667px/18.880px 'Liberation Mono', monospace;color:#000;white-space:pre">3</div>
<div style="left:136px;top:928px;font:15.5px/18px 'Liberation Mono', monospace;color:#20208F;white-space:pre">进程已结束<span style="font-size:16.667px">,</span>退出代码<span style="font-size:16.667px">0</span></div>
<div style="left:136px;top:963px;width:876px;height:11px;background:#DFDFDF;"></div>
<div style="left:1854px;top:730px;width:11px;height:231px;background:#E0E0E0;"></div>
<svg style="position:absolute;left:10px;top:991px;" width="12" height="12" viewBox="0 0 12 12"><rect x="1" y="1" width="9.5" height="9.5" rx="2" fill="#E6EEFD" stroke="#4B7FEA" stroke-width="1.3"/></svg>
<div style="left:26.00px;top:987.24px;font:normal normal 18.300px/20.441px 'Liberation Sans', sans-serif;color:#111;white-space:pre;transform:scaleX(1.0557);transform-origin:0 0;">untitled</div>
<svg style="position:absolute;left:97px;top:990px;" width="8" height="12" viewBox="0 0 8 12"><path d="M1.5 1 L6 6 L1.5 11" fill="none" stroke="#9A9A9A" stroke-width="1.3"/></svg>
<div style="left:112.30px;top:987.24px;font:normal normal 18.300px/20.441px 'Liberation Sans', sans-serif;color:#111;white-space:pre;transform:scaleX(0.9183);transform-origin:0 0;">src</div>
<svg style="position:absolute;left:143px;top:990px;" width="8" height="12" viewBox="0 0 8 12"><path d="M1.5 1 L6 6 L1.5 11" fill="none" stroke="#9A9A9A" stroke-width="1.3"/></svg>
<svg style="position:absolute;left:159px;top:986.5px" width="18" height="18" viewBox="0 0 18 18"><circle cx="9" cy="9" r="7.9" fill="#E8EFFD" stroke="#4B7FEA" stroke-width="1.5"/><path d="M11.9 7.0 A3.6 3.6 0 1 0 11.9 11.0" fill="none" stroke="#4B7FEA" stroke-width="1.3"/></svg>
<div style="left:183.70px;top:987.24px;font:normal normal 18.300px/20.441px 'Liberation Sans', sans-serif;color:#111;white-space:pre;transform:scaleX(0.9971);transform-origin:0 0;">Homework02</div>
<svg style="position:absolute;left:301px;top:990px;" width="8" height="12" viewBox="0 0 8 12"><path d="M1.5 1 L6 6 L1.5 11" fill="none" stroke="#9A9A9A" stroke-width="1.3"/></svg>
<svg style="position:absolute;left:317px;top:987.5px;" width="18" height="18" viewBox="0 0 18 18"><circle cx="9" cy="9" r="7.9" fill="#FDEDED" stroke="#E55757" stroke-width="1.4"/><path d="M5.2 12.5 V7 M5.2 8.5 Q5.2 6.5 7 6.5 Q9 6.5 9 8.5 V12.5 M9 8.5 Q9 6.5 10.8 6.5 Q12.8 6.5 12.8 8.5 V12.5" fill="none" stroke="#E55757" stroke-width="1.3"/></svg>
<div style="left:341.30px;top:987.24px;font:normal normal 18.300px/20.441px 'Liberation Sans', sans-serif;color:#111;white-space:pre;transform:scaleX(0.9858);transform-origin:0 0;">main</div>
<div style="left:1615.70px;top:987.14px;font:normal normal 18.300px/20.441px 'Liberation Sans', sans-serif;color:#111;white-space:pre;transform:scaleX(0.9368);transform-origin:0 0;">10:36</div>
<div style="left:1673.40px;top:987.14px;font:normal normal 18.300px/20.441px 'Liberation Sans', sans-serif;color:#111;white-space:pre;transform:scaleX(0.8203);transform-origin:0 0;">CRLF</div>
<div style="left:1728.60px;top:987.14px;font:normal normal 18.300px/20.441px 'Liberation Sans', sans-serif;color:#111;white-space:pre;transform:scaleX(0.9239);transform-origin:0 0;">UTF-8</div>
<div style="left:1792.00px;top:989.12px;font:normal normal 17.000px/18.989px 'Liberation Sans', sans-serif;color:#111;white-space:pre;">4 个空格</div>
<svg style="position:absolute;left:1874px;top:989px;" width="18" height="16" viewBox="0 0 18 16"><rect x="1" y="6.5" width="12" height="8.5" rx="2" fill="none" stroke="#6C707E" stroke-width="1.4"/><path d="M9.5 6.5 V4.5 Q9.5 1.2 13 1.2 Q16.5 1.2 16.5 4.5 V6" fill="none" stroke="#6C707E" stroke-width="1.4"/><rect x="6" y="9.5" width="2" height="3" fill="#6C707E"/></svg>
<svg style="position:absolute;left:23px;top:1033px;" width="30" height="30" viewBox="0 0 30 30"><defs><linearGradient id="wg" x1="0" y1="0" x2="1" y2="1"><stop offset="0" stop-color="#3CCBF4"/><stop offset="1" stop-color="#0A6CD6"/></linearGradient></defs><rect x="0" y="0" width="13.8" height="13.8" rx="1.2" fill="url(#wg)"/><rect x="15.2" y="0" width="13.8" height="13.8" rx="1.2" fill="url(#wg)"/><rect x="0" y="15.2" width="13.8" height="13.8" rx="1.2" fill="url(#wg)"/><rect x="15.2" y="15.2" width="13.8" height="13.8" rx="1.2" fill="url(#wg)"/></svg>
<div style="left:71px;top:1028px;width:123px;height:38px;background:#EEF2F6;border-radius:19px"></div>
<svg style="position:absolute;left:106px;top:1037px;" width="19" height="19" viewBox="0 0 19 19"><circle cx="7.5" cy="7.5" r="6" fill="none" stroke="#1A1A1A" stroke-width="1.8"/><path d="M11.8 11.8 L17.5 17.5" stroke="#1A1A1A" stroke-width="2"/></svg>
<div style="left:131.00px;top:1039.97px;font:normal normal 15.500px/17.314px 'Liberation Sans', sans-serif;color:#1A1A1A;white-space:pre;">搜索</div>
<svg style="position:absolute;left:211px;top:1033px;" width="32" height="28" viewBox="0 0 32 28"><path d="M1 2.5 Q1 1 2.5 1 H11 L14 4 H29.5 Q31 4 31 5.5 V26 Q31 27.5 29.5 27.5 H2.5 Q1 27.5 1 26 Z" fill="#F4C02E"/><rect x="1" y="8" width="30" height="19.5" rx="1.5" fill="#FFD95A"/><rect x="8.5" y="20" width="15" height="7.5" rx="1.5" fill="#1570D4"/><rect x="11" y="21.8" width="10" height="1.5" fill="#7FC4FF"/></svg>
<svg style="position:absolute;left:266px;top:1031px;" width="32" height="32" viewBox="0 0 32 32"><defs><linearGradient id="eg1" x1="0" y1="0.2" x2="1" y2="0.7"><stop offset="0" stop-color="#38B6F4"/><stop offset="0.5" stop-color="#2FC3C9"/><stop offset="1" stop-color="#5CE35E"/></linearGradient><linearGradient id="eg2" x1="0" y1="0" x2="0.3" y2="1"><stop offset="0" stop-color="#1896E6"/><stop offset="1" stop-color="#0A78D6"/></linearGradient></defs><circle cx="16" cy="16" r="15.2" fill="url(#eg1)"/><path d="M16 19 C19 20.8 27 20.8 31.8 15.5 L32 32 L10 32 Z" fill="#D4DFE9"/><path d="M0.9 13.8 C3 9.5 6.5 8 10 8 C14.5 8 18.5 10.5 19.4 13.5 L12.4 17.8 C11.2 21 11.2 27 14.2 31.3 A15.2 15.2 0 0 1 0.9 13.8 Z" fill="url(#eg2)"/><path d="M12.4 17.6 C10 21 10.3 26.5 13.2 31.1 C18.5 32.2 25 29 28.9 23.2 C24 25.2 19 24.5 16 21.5 C14.5 20 13.4 19 12.4 17.6 Z" fill="#0D57A8"/><circle cx="15.8" cy="16" r="3.4" fill="#D4DFE9"/></svg>
<svg style="position:absolute;left:321px;top:1033px;" width="30" height="30" viewBox="0 0 30 30"><path d="M10 4 V1.5 H20 V4" fill="none" stroke="#35B4E8" stroke-width="2"/><rect x="0.5" y="4" width="29" height="25.5" rx="3" fill="#13407D"/><rect x="9" y="11" width="5.5" height="5.5" fill="#F25022"/><rect x="15.5" y="11" width="5.5" height="5.5" fill="#7FBA00"/><rect x="9" y="17.5" width="5.5" height="5.5" fill="#00A4EF"/><rect x="15.5" y="17.5" width="5.5" height="5.5" fill="#FFB900"/></svg>
<svg style="position:absolute;left:377px;top:1032px;" width="30" height="30" viewBox="0 0 30 30"><rect x="0" y="0" width="30" height="30" rx="4.5" fill="#3D87FB"/><path d="M1.9 6.1 Q5 6.3 8.4 7.6 L12.4 10.5 Q18 6 25.8 3.2 Q23 9 20.1 13.7 L27.4 16.6 Q22 17.2 17 19.3 L20.5 27.5 Q17 23.5 13.8 22 Q8 20 7.1 14.9 Q6.6 11 6.7 9.9 Q4.5 7.5 1.9 6.1 Z" fill="#fff"/></svg>
<svg style="position:absolute;left:431px;top:1034px;" width="33" height="25" viewBox="0 0 33 25"><ellipse cx="12.5" cy="10" rx="11.5" ry="9.5" fill="#2DC84D"/><path d="M5 17 L3.5 22 L9.5 18.5 Z" fill="#2DC84D"/><circle cx="8.5" cy="7.5" r="1.5" fill="#1B5E2A"/><circle cx="16" cy="7.5" r="1.5" fill="#1B5E2A"/><ellipse cx="22.5" cy="16" rx="9" ry="7.5" fill="#E6E6E6"/><path d="M27 21 L29 24.5 L24 22.5 Z" fill="#E6E6E6"/><circle cx="19.5" cy="14.8" r="1.2" fill="#888"/><circle cx="25.5" cy="14.8" r="1.2" fill="#888"/></svg>
<svg style="position:absolute;left:488px;top:1033px;" width="28" height="28" viewBox="0 0 28 28"><rect x="0" y="0" width="27.5" height="27.5" rx="4" fill="#E2242B"/><path d="M2 26 C3 16 10 8 20 5 M5.5 26.5 C6.5 18 12 11 21 8 M9.5 26.5 C10.5 20 14.5 14 22 11 M13.5 26.5 C14.5 21 17.5 17 23 14.5" fill="none" stroke="#fff" stroke-width="1.7"/><path d="M22 1.5 L23.3 4.7 L26.5 5 L24 7.2 L24.8 10.5 L22 8.8 L19.2 10.5 L20 7.2 L17.5 5 L20.7 4.7 Z" fill="#fff"/></svg>
<svg style="position:absolute;left:544px;top:1033px;" width="26" height="28" viewBox="0 0 26 28"><path d="M0.5 0.5 H25 V22 L12.8 27.5 L0.5 22 Z" fill="#22A03A"/><path d="M6.5 6.5 V20 M18.5 6.5 V20 M6.5 13 H18.5" stroke="#fff" stroke-width="2.3"/></svg>
<div style="left:588px;top:1023px;width:48px;height:48px;background:#EEF2F7;border-radius:5px"></div>
<svg style="position:absolute;left:598px;top:1034px;" width="28" height="27" viewBox="0 0 28 27"><defs><linearGradient id="ijg2" x1="0" y1="0" x2="1" y2="1"><stop offset="0" stop-color="#FF8A00"/><stop offset="0.2" stop-color="#FF2D78"/><stop offset="0.45" stop-color="#8A3FD8"/><stop offset="0.6" stop-color="#1A7CF5"/><stop offset="0.8" stop-color="#20B6F5"/><stop offset="1" stop-color="#6A7BFF"/></linearGradient><linearGradient id="iji2" x1="0" y1="0" x2="1" y2="1"><stop offset="0" stop-color="#3D0032"/><stop offset="1" stop-color="#000"/></linearGradient></defs><rect x="1" y="0" width="26" height="26" fill="url(#ijg2)"/><rect x="1.3" y="0.3" width="25.4" height="25.4" fill="none" stroke="#111" stroke-width="0.9" stroke-dasharray="4 3"/><rect x="5" y="3.9" width="18" height="18" fill="url(#iji2)"/><path d="M6.8 5.9 H10.6 M8.7 5.9 V12.6 M6.8 12.6 H10.6 M14.6 5.6 V10.8 Q14.6 12.8 12.2 12.8" fill="none" stroke="#fff" stroke-width="1.6"/><rect x="6.8" y="18.9" width="7.2" height="1.4" fill="#fff"/></svg>
<div style="left:602px;top:1067px;width:20px;height:4px;background:#1BA3B8;border-radius:2px"></div>
<svg style="position:absolute;left:652px;top:1031px;" width="32" height="32" viewBox="0 0 32 32"><rect x="0" y="1" width="22" height="22" rx="2" fill="#EDF0F3"/><g fill="#D83B01"><rect x="3" y="4" width="3" height="3"/><rect x="8" y="4" width="3" height="3"/><rect x="13" y="4" width="3" height="3"/><rect x="3" y="9" width="3" height="3"/><rect x="3" y="14" width="3" height="3"/></g><path d="M17.5 7 V22 M7 18.5 H22" stroke="#8A9097" stroke-width="2.4"/><path d="M22 18.5 H25 M17.5 22 V25.5" stroke="#1BA1E2" stroke-width="2.4"/><circle cx="27.2" cy="16.8" r="2.5" fill="none" stroke="#1BA1E2" stroke-width="2"/><circle cx="16" cy="28" r="2.5" fill="none" stroke="#1BA1E2" stroke-width="2"/></svg>
<div style="left:278px;top:1067.5px;width:8px;height:3.5px;background:#70757D;border-radius:2px"></div>
<div style="left:387.8px;top:1067.5px;width:8px;height:3.5px;background:#70757D;border-radius:2px"></div>
<div style="left:442.9px;top:1067.5px;width:8px;height:3.5px;background:#70757D;border-radius:2px"></div>
<div style="left:498px;top:1067.5px;width:8px;height:3.5px;background:#70757D;border-radius:2px"></div>
<div style="left:552.6px;top:1067.5px;width:8px;height:3.5px;background:#70757D;border-radius:2px"></div>
<div style="left:662.3px;top:1067.5px;width:8px;height:3.5px;background:#70757D;border-radius:2px"></div>
<svg style="position:absolute;left:1536px;top:1041px;" width="17" height="11" viewBox="0 0 17 11"><path d="M1.5 9.5 L8.2 2.5 L15 9.5" fill="none" stroke="#1F1F1F" stroke-width="1.6"/></svg>
<svg style="position:absolute;left:1573px;top:1039px;" width="22" height="17" viewBox="0 0 22 17"><path d="M5 15 C2 15 0.8 13 0.8 11 C0.8 8.5 2.8 7 5 7 C5.5 3.5 8.5 1 12 1 C15.5 1 18 3.5 18.5 6.5 C20.5 7 21.5 9 21.5 11 C21.5 13.5 19.5 15 17.5 15 Z" fill="#C9C9C9" stroke="#2A2A2A" stroke-width="1.3"/><path d="M4 1.5 L18 16" stroke="#2A2A2A" stroke-width="1.5"/></svg>
<svg style="position:absolute;left:1616px;top:1037px;" width="19" height="21" viewBox="0 0 19 21"><rect x="3.4" y="0.7" width="8" height="4.4" fill="none" stroke="#1F1F1F" stroke-width="1.3"/><circle cx="5.8" cy="2.9" r="0.6" fill="#1F1F1F"/><circle cx="9" cy="2.9" r="0.6" fill="#1F1F1F"/><path d="M10.4 19.2 H3.8 Q2.6 19.2 2.6 18 V5.8 H12.2 V15" fill="none" stroke="#1F1F1F" stroke-width="1.3"/><path d="M10.6 16.6 L12.6 18.6 L16.8 14.3" fill="none" stroke="#3A3A3A" stroke-width="1.1"/></svg>
<div style="left:1654.40px;top:1038.17px;font:normal normal 18.600px/20.776px 'Liberation Sans', sans-serif;color:#1F1F1F;white-space:pre;">英</div>
<svg style="position:absolute;left:1693px;top:1039px;" width="22" height="15" viewBox="0 0 22 15"><path d="M1 5 Q11 -3.5 21 5 M4.2 8.2 Q11 2.5 17.8 8.2 M7.4 11 Q11 8 14.6 11" fill="none" stroke="#1F1F1F" stroke-width="1.5"/><circle cx="11" cy="13.3" r="1.5" fill="#1F1F1F"/></svg>
<svg style="position:absolute;left:1723px;top:1039px;" width="21" height="16" viewBox="0 0 21 16"><path d="M1 5 H4.5 L9.5 1 V15 L4.5 11 H1 Z" fill="none" stroke="#1F1F1F" stroke-width="1.3" stroke-linejoin="round"/><path d="M12 5 Q14 8 12 11 M14.8 3 Q18 8 14.8 13" fill="none" stroke="#1F1F1F" stroke-width="1.3"/><path d="M17.5 1.5 Q22 8 17.5 14.5" fill="none" stroke="#B8BEC6" stroke-width="1.2"/></svg>
<svg style="position:absolute;left:1753px;top:1036px;" width="22" height="18" viewBox="0 0 22 18"><path d="M7 5 H16 Q18 5 18 7 V14.6 Q18 16.6 16 16.6 H3.2 Q1.2 16.6 1.2 14.6 V9.5" fill="none" stroke="#1F1F1F" stroke-width="1.3"/><rect x="18" y="8.5" width="2.6" height="5" rx="1" fill="#1F1F1F"/><path d="M6.5 10 L11.6 7.3 V14.3 H4.3 Z" fill="#1F1F1F"/><path d="M4.5 0.8 L2.2 6.5 L5.2 6.2 L2.8 12.5" fill="none" stroke="#1F1F1F" stroke-width="1.5" stroke-linejoin="round"/></svg>
<div style="left:1828.00px;top:1029.58px;font:normal normal 14.500px/16.197px 'Liberation Sans', sans-serif;color:#1A1A1A;white-space:pre;transform:scaleX(0.9370);transform-origin:0 0;">21:43</div>
<div style="left:1795.00px;top:1049.28px;font:normal normal 14.500px/16.197px 'Liberation Sans', sans-serif;color:#1A1A1A;white-space:pre;transform:scaleX(1.0495);transform-origin:0 0;">2024/11/8</div>
<svg style="position:absolute;left:1873px;top:1037px;" width="18" height="20" viewBox="0 0 18 20"><path d="M9 1.5 C5 1.5 3 4.5 3 8 V12.5 L1 15.5 H17 L15 12.5 V8 C15 4.5 13 1.5 9 1.5 Z" fill="none" stroke="#1F1F1F" stroke-width="1.3" stroke-linejoin="round"/><path d="M6.8 17.5 Q9 19.5 11.2 17.5" fill="none" stroke="#1F1F1F" stroke-width="1.3"/></svg>
</body></html>
